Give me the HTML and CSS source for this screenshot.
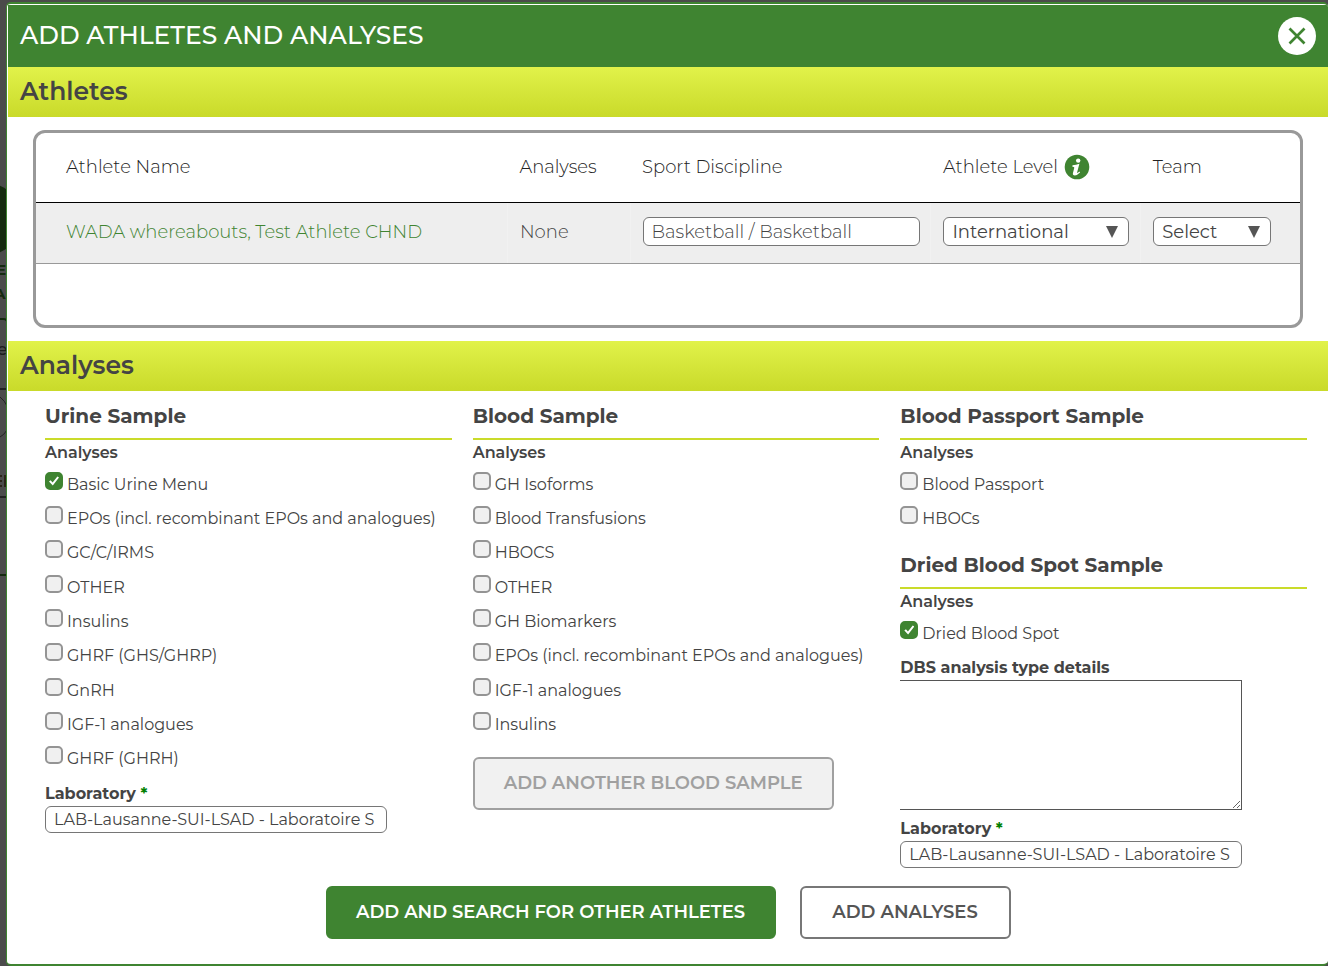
FILE: index.html
```html
<!DOCTYPE html>
<html lang="en">
<head>
<meta charset="utf-8">
<meta name="viewport" content="width=device-width, initial-scale=1">
<title>Add Athletes and Analyses</title>
<link rel="stylesheet" href="styles.css">
</head>
<body>
<svg class="backdrop" width="7" height="600" aria-hidden="true">
  <circle cx="-14" cy="219" r="36" fill="#152a0f"/>
  <text x="-4" y="275" class="backdrop-strong">E</text>
  <text x="-6" y="299" class="backdrop-strong">A</text>
  <path d="M0 319h3q3 0 4 2" fill="none" stroke="#152a0f" stroke-width="2"/>
  <text x="-3" y="355" class="backdrop-text">e</text>
  <path d="M0 389h7M0 497h7" stroke="#222" stroke-width="2"/>
  <path d="M0 397q5 4 7 9M0 437q4-2 7-7" fill="none" stroke="#222"/>
  <path d="M0 476h2M0 481h2M0 486h2M5 475v12" stroke="#2b2418" stroke-width="2"/>
  <path d="M0 575h7" stroke="#152a0f" stroke-width="2"/>
</svg>
<main class="dialog" role="dialog" aria-labelledby="dialog-title">
  <header class="dialog-header">
    <h1 id="dialog-title">ADD ATHLETES AND ANALYSES</h1>
    <button class="close" type="button" aria-label="Close">
      <svg width="18" height="18" viewBox="0 0 18 18" aria-hidden="true"><path d="M1.500 1.500l15 15M16.500 1.500l-15 15" stroke="#3f8431" stroke-width="2.700"/></svg>
    </button>
  </header>

  <h2 class="section-bar">Athletes</h2>
  <div class="panel">
    <table class="athletes">
      <colgroup><col class="col-name"><col class="col-analyses"><col class="col-sport"><col class="col-level"><col></colgroup>
      <thead>
        <tr>
          <th scope="col">Athlete Name</th>
          <th scope="col">Analyses</th>
          <th scope="col">Sport Discipline</th>
          <th scope="col"><span class="with-icon">Athlete Level
            <svg width="26" height="26" viewBox="0 0 26 26" aria-hidden="true"><circle cx="13" cy="13" r="12.3" fill="#3f8431"/><circle cx="14.2" cy="6.6" r="2.2" fill="#fff"/><path d="M8.500 11.200q3.600-.1 6.900-1.400l-2.300 8.800q-.2 1.100 2.400-1l.6.900q-3 2.900-5.200 2.900-2.600 0-1.900-2.600l1.300-5.100q.1-1-1.900-1z" fill="#fff"/></svg>
          </span></th>
          <th scope="col">Team</th>
        </tr>
      </thead>
      <tbody>
        <tr>
          <td><a href="#">WADA whereabouts, Test Athlete CHND</a></td>
          <td>None</td>
          <td><input class="field field-sport" type="text" aria-label="Sport Discipline" value="Basketball / Basketball"></td>
          <td><span class="select select-level"><select aria-label="Athlete Level"><option>International</option></select><svg width="12" height="12" viewBox="0 0 12 12" aria-hidden="true"><path d="M0 0h12L6 12z"/></svg></span></td>
          <td><span class="select select-team"><select aria-label="Team"><option>Select</option></select><svg width="12" height="12" viewBox="0 0 12 12" aria-hidden="true"><path d="M0 0h12L6 12z"/></svg></span></td>
        </tr>
      </tbody>
    </table>
  </div>

  <h2 class="section-bar">Analyses</h2>
  <div class="samples">
    <section>
      <h3>Urine Sample</h3>
      <h4>Analyses</h4>
      <ul class="checks">
        <li><label><input type="checkbox" checked>Basic Urine Menu</label></li>
        <li><label><input type="checkbox">EPOs (incl. recombinant EPOs and analogues)</label></li>
        <li><label><input type="checkbox">GC/C/IRMS</label></li>
        <li><label><input type="checkbox">OTHER</label></li>
        <li><label><input type="checkbox">Insulins</label></li>
        <li><label><input type="checkbox">GHRF (GHS/GHRP)</label></li>
        <li><label><input type="checkbox">GnRH</label></li>
        <li><label><input type="checkbox">IGF-1 analogues</label></li>
        <li><label><input type="checkbox">GHRF (GHRH)</label></li>
      </ul>
      <label class="caption" for="urine-lab">Laboratory <span class="required">*</span></label>
      <input class="field field-lab" id="urine-lab" type="text" value="LAB-Lausanne-SUI-LSAD - Laboratoire S">
    </section>
    <section>
      <h3>Blood Sample</h3>
      <h4>Analyses</h4>
      <ul class="checks">
        <li><label><input type="checkbox">GH Isoforms</label></li>
        <li><label><input type="checkbox">Blood Transfusions</label></li>
        <li><label><input type="checkbox">HBOCS</label></li>
        <li><label><input type="checkbox">OTHER</label></li>
        <li><label><input type="checkbox">GH Biomarkers</label></li>
        <li><label><input type="checkbox">EPOs (incl. recombinant EPOs and analogues)</label></li>
        <li><label><input type="checkbox">IGF-1 analogues</label></li>
        <li><label><input type="checkbox">Insulins</label></li>
      </ul>
      <button class="button button-add" type="button" disabled>ADD ANOTHER BLOOD SAMPLE</button>
    </section>
    <section>
      <h3>Blood Passport Sample</h3>
      <h4>Analyses</h4>
      <ul class="checks">
        <li><label><input type="checkbox">Blood Passport</label></li>
        <li><label><input type="checkbox">HBOCs</label></li>
      </ul>
      <h3>Dried Blood Spot Sample</h3>
      <h4>Analyses</h4>
      <ul class="checks">
        <li><label><input type="checkbox" checked>Dried Blood Spot</label></li>
      </ul>
      <label class="caption" for="dbs-details">DBS analysis type details</label>
      <textarea id="dbs-details"></textarea>
      <label class="caption" for="dbs-lab">Laboratory <span class="required">*</span></label>
      <input class="field field-lab" id="dbs-lab" type="text" value="LAB-Lausanne-SUI-LSAD - Laboratoire S">
    </section>
  </div>

  <footer class="actions">
    <button class="button button-primary" type="button">ADD AND SEARCH FOR OTHER ATHLETES</button>
    <button class="button button-secondary" type="button">ADD ANALYSES</button>
  </footer>
</main>
</body>
</html>
```
FILE: styles.css
```css
* {
  box-sizing: border-box;
}

body {
  margin: 0;
  padding: 2px 0 0 6px;
  background: #4b4b4b;
  color: #444;
  font-family: Montserrat, Inter, "Open Sans", sans-serif;
  font-size: 16px;
  font-weight: 400;
}

h1, h2, h3, h4, ul {
  margin: 0;
  padding: 0;
}

input, select, textarea, button {
  font: inherit;
  color: inherit;
}

.backdrop {
  position: absolute;
  left: 0;
  top: 0;
}

.backdrop-strong {
  font-size: 15px;
  font-weight: 700;
  fill: #152a0f;
}

.backdrop-text {
  font-size: 17px;
  font-weight: 500;
  fill: #1c1c1c;
}

.dialog {
  position: relative;
  border: 1px solid #3f8431;
  border-width: 2px 0 2px 1px;
  border-radius: 5px;
  background: #fff;
  overflow: hidden;
  padding: 1px 0 0 1px;
}

.dialog-header {
  display: flex;
  align-items: center;
  justify-content: space-between;
  height: 62px;
  padding: 0 12px;
  background: #3f8431;
  color: #fff;
}

.dialog-header h1 {
  padding-bottom: 2px;
  font-size: 25px;
  font-weight: 500;
}

.close {
  display: grid;
  place-items: center;
  width: 38px;
  height: 38px;
  padding: 0;
  border: 0;
  border-radius: 50%;
  background: #fff;
}

.section-bar {
  padding: 0 12px 2px;
  background: linear-gradient(#e1f24a, #c9da2a);
  font-size: 25px;
  font-weight: 600;
  line-height: 48px;
}

.panel {
  min-height: 198px;
  margin: 13px 25px;
  border: 3px solid #999;
  border-radius: 12px;
}

.athletes {
  width: 100%;
  border-collapse: collapse;
  table-layout: fixed;
  font-size: 18px;
  font-weight: 300;
}

.col-name { width: 37.3%; }
.col-analyses { width: 9.7%; }
.col-sport { width: 23.8%; }
.col-level { width: 16.6%; }

.athletes th,
.athletes td {
  padding: 0 0 2px 12px;
  text-align: left;
  white-space: nowrap;
}

.athletes th:first-child,
.athletes td:first-child {
  padding-left: 30px;
}

.athletes th {
  height: 69px;
  padding-bottom: 0;
  border-bottom: 1px solid #000;
  color: #222;
  font-weight: 300;
}

.athletes td {
  height: 61px;
  border-bottom: 1px solid #999;
  background: #eee;
}

.athletes td + td {
  border-left: 1px solid #f1f1f1;
}

.athletes a {
  color: #3f8431;
  text-decoration: none;
}

.with-icon {
  display: flex;
  align-items: center;
  gap: 6px;
}

.field {
  display: block;
  height: 27px;
  padding: 0 8px;
  border: 1px solid #767676;
  border-radius: 6px;
  background: #fff;
}

.field-sport {
  width: 277px;
  height: 29px;
}

.field-lab {
  width: 342px;
}

.select {
  display: grid;
  align-items: center;
  height: 29px;
  border: 1px solid #767676;
  border-radius: 6px;
  background: #fff;
  font-weight: 400;
}

.select select {
  grid-area: 1 / 1;
  width: 100%;
  height: 27px;
  padding: 0 8px;
  border: 0;
  background: none;
  appearance: none;
}

.select svg {
  grid-area: 1 / 1;
  justify-self: end;
  margin-right: 10px;
  fill: #555;
  pointer-events: none;
}

.select-level { width: 186px; }
.select-team { width: 118px; }

.samples {
  display: grid;
  grid-template-columns: repeat(3, minmax(0, 1fr));
  gap: 21px;
  padding: 0 21px 0 37px;
}

h3 {
  padding: 13px 0 10px;
  border-bottom: 2px solid #cadb2a;
  font-size: 20px;
  font-weight: 700;
  line-height: 24px;
}

h4 {
  padding-bottom: 3px;
  font-size: 16px;
  font-weight: 600;
  line-height: 25px;
}

.checks {
  margin-bottom: 4px;
  list-style: none;
}

.checks li:nth-child(3n) {
  padding-bottom: 1px;
}

.checks label {
  display: flex;
  align-items: flex-start;
  gap: 4px;
  line-height: 34px;
  white-space: nowrap;
}

.checks input {
  flex: none;
  width: 18px;
  height: 18px;
  margin: 4px 0 0;
  border: 2px solid #949494;
  border-radius: 5px;
  background: #f0f0f0;
  appearance: none;
}

.checks input:checked {
  display: grid;
  place-items: center;
  border-color: #3f8431;
  background: #3f8431;
}

.checks input:checked::before {
  content: "";
  width: 10px;
  height: 10px;
  background: #fff;
  clip-path: polygon(0 56%, 16% 42%, 36% 64%, 84% 4%, 100% 16%, 38% 94%);
}

.caption {
  display: block;
  padding-top: 1px;
  font-size: 16px;
  font-weight: 700;
  line-height: 24px;
}

.required {
  color: #008000;
}

textarea {
  display: block;
  width: 342px;
  height: 130px;
  margin-bottom: 6px;
  border: 1px solid #555;
  border-left: 0;
}

.button {
  height: 53px;
  padding: 0 6px 2px;
  border: 2px solid #777;
  border-radius: 6px;
  background: #fff;
  color: #555;
  font-size: 18px;
  font-weight: 600;
}

.button-add {
  min-width: 361px;
  margin-top: 11px;
}

.button:disabled {
  border-color: #a0a0a0;
  background: #f1f1f1;
  color: #a0a0a0;
}

.button-primary {
  min-width: 450px;
  border-color: #3f8431;
  background: #3f8431;
  color: #fff;
}

.button-secondary {
  min-width: 211px;
}

.actions {
  display: flex;
  justify-content: center;
  gap: 24px;
  padding: 18px 0 25px;
}
```
